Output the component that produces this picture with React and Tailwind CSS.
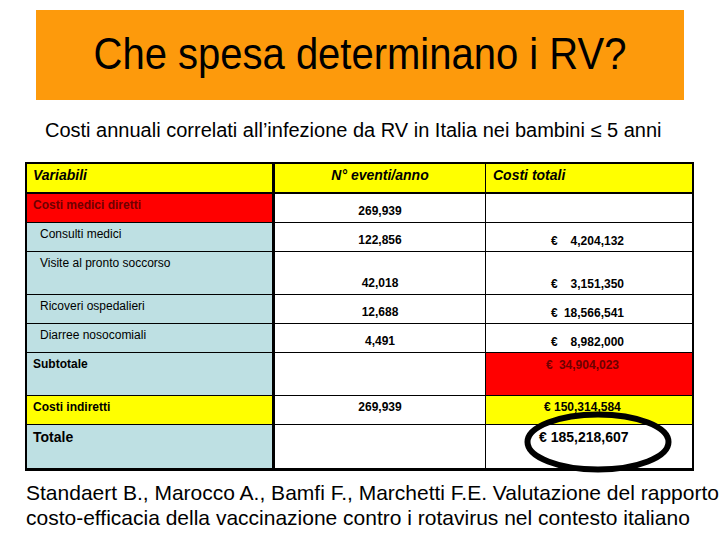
import React from 'react';

// Excel-like cost table rows: h = row height (incl. bottom border)
const ROWS = [
  { label: 'Costi medici diretti', kind: 'group', h: 'h-[29px]', n: '269,939' },
  { label: 'Consulti medici', kind: 'item', h: 'h-[29px]', n: '122,856', eur: '4,204,132' },
  { label: 'Visite al pronto soccorso', kind: 'item', h: 'h-[43px]', n: '42,018', eur: '3,151,350' },
  { label: 'Ricoveri ospedalieri', kind: 'item', h: 'h-[29px]', n: '12,688', eur: '18,566,541' },
  { label: 'Diarree nosocomiali', kind: 'item', h: 'h-[29px]', n: '4,491', eur: '8,982,000' },
];

const ItemRow = ({ row }) => {
  const col1 =
    row.kind === 'group'
      ? 'bg-[#ff0000] pl-[6px] pt-[4px] font-bold text-[#6e0000]'
      : 'bg-[#bee0e3] pl-[13px] pt-[4px] text-black';
  return (
    <div className={`flex ${row.h} border-b border-black`}>
      <div className={`w-[248px] border-r-[3px] border-black text-[12px] leading-[14px] ${col1}`}>{row.label}</div>
      <div className="w-[211px] border-r border-black flex items-end justify-center pb-[4px] text-[12px] leading-[14px] font-bold">
        {row.n}
      </div>
      <div className="flex-1 flex items-end pb-[3px] text-[12px] leading-[14px] font-bold">
        {row.eur && (
          <div className="ml-[65px] w-[73px] flex justify-between">
            <span>€</span>
            <span>{row.eur}</span>
          </div>
        )}
      </div>
    </div>
  );
};

const App = () => {
  return (
    <div className="w-[720px] h-[540px] bg-white overflow-hidden font-['Liberation_Sans',Arial,sans-serif] text-black">
      {/* Title bar */}
      <div className="pt-[10px] px-[36px]">
        <div className="h-[90px] bg-[#fd9a0c] flex items-center justify-center text-[40px] leading-none pb-[2px]">
          <span className="inline-block scale-y-[1.1]">Che spesa determinano i RV?</span>
        </div>
      </div>

      <p className="mt-[19px] pl-[45px] text-[20px] leading-[22px] whitespace-nowrap">
        Costi annuali correlati all’infezione da RV in Italia nei bambini ≤ 5 anni
      </p>

      {/* Table */}
      <div className="relative mt-[21px] ml-[25px] w-[669px] border-l-2 border-r-2 border-t-2 border-b-[3px] border-black">
        <div className="flex h-[30px] bg-[#ffff00] border-b-2 border-black text-[14px] leading-[16px] font-bold italic">
          <div className="w-[248px] border-r-[3px] border-black pl-[6px] pt-[3px]">Variabili</div>
          <div className="w-[211px] border-r border-black text-center pt-[3px]">N° eventi/anno</div>
          <div className="flex-1 pl-[7px] pt-[3px]">Costi totali</div>
        </div>

        {ROWS.map(r => <ItemRow key={r.label} row={r} />)}

        {/* Subtotale */}
        <div className="flex h-[43px] border-b border-black text-[12px] leading-[14px] font-bold">
          <div className="w-[248px] border-r-[3px] border-black bg-[#bee0e3] pl-[6px] pt-[4px]">Subtotale</div>
          <div className="w-[211px] border-r border-black"></div>
          <div className="flex-1 bg-[#ff0000] text-[#6e0000] pt-[5px]">
            <div className="ml-[60px] w-[73px] flex justify-between">
              <span>€</span>
              <span>34,904,023</span>
            </div>
          </div>
        </div>

        {/* Costi indiretti */}
        <div className="flex h-[29px] border-b border-black text-[12px] leading-[14px] font-bold">
          <div className="w-[248px] border-r-[3px] border-black bg-[#ffff00] pl-[6px] pt-[4px]">Costi indiretti</div>
          <div className="w-[211px] border-r border-black text-center pt-[4px]">269,939</div>
          <div className="flex-1 bg-[#ffff00] pt-[4px] pl-[58px]">€ 150,314,584</div>
        </div>

        {/* Totale */}
        <div className="flex h-[43px] text-[14px] leading-[16px] font-bold">
          <div className="w-[248px] border-r-[3px] border-black bg-[#bee0e3] pl-[6px] pt-[4px]">Totale</div>
          <div className="w-[211px] border-r border-black"></div>
          <div className="flex-1 pt-[4px] pl-[53px]">€ 185,218,607</div>
        </div>

        {/* hand-drawn highlight ring */}
        <svg className="absolute left-[494px] top-[243px] pointer-events-none" width="160" height="72" viewBox="0 0 160 72">
          <ellipse cx="77" cy="35" rx="70.5" ry="27.5" fill="none" stroke="#000" strokeWidth="6" />
        </svg>
      </div>

      <p className="mt-[9px] pl-[26px] text-[21px] leading-[25px] whitespace-nowrap">
        Standaert B., Marocco A., Bamfi F., Marchetti F.E. Valutazione del rapporto
        <br />
        costo-efficacia della vaccinazione contro i rotavirus nel contesto italiano
      </p>
    </div>
  );
};

export default App;
